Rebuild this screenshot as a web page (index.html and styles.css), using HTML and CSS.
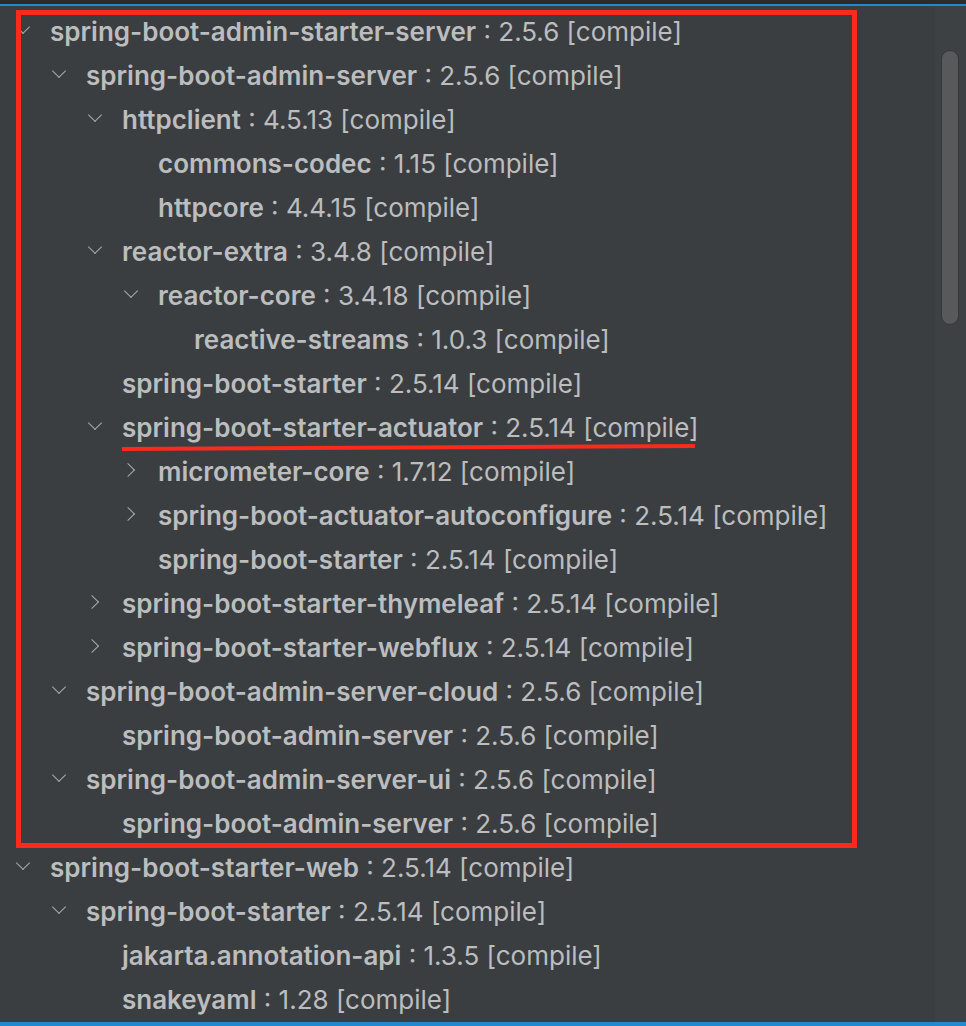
FILE: index.html
```html
<!DOCTYPE html>
<html>
<head>
<meta charset="utf-8">
<link rel="stylesheet" href="styles.css">
</head>
<body>
<div class="page">
  <div class="topbar"></div>
  <div class="blueline"></div>
  <div class="tree">
    <div class="row l0"><span class="chev down"></span><b>spring-boot-admin-starter-server</b><span class="ver"> : 2.5.6 [compile]</span></div>
    <div class="row l1"><span class="chev down"></span><b>spring-boot-admin-server</b><span class="ver"> : 2.5.6 [compile]</span></div>
    <div class="row l2"><span class="chev down"></span><b>httpclient</b><span class="ver"> : 4.5.13 [compile]</span></div>
    <div class="row l3"><span class="chev"></span><b>commons-codec</b><span class="ver"> : 1.15 [compile]</span></div>
    <div class="row l3"><span class="chev"></span><b>httpcore</b><span class="ver"> : 4.4.15 [compile]</span></div>
    <div class="row l2"><span class="chev down"></span><b>reactor-extra</b><span class="ver"> : 3.4.8 [compile]</span></div>
    <div class="row l3"><span class="chev down"></span><b>reactor-core</b><span class="ver"> : 3.4.18 [compile]</span></div>
    <div class="row l4"><span class="chev"></span><b>reactive-streams</b><span class="ver"> : 1.0.3 [compile]</span></div>
    <div class="row l2"><span class="chev"></span><b>spring-boot-starter</b><span class="ver"> : 2.5.14 [compile]</span></div>
    <div class="row l2"><span class="chev down"></span><b>spring-boot-starter-actuator</b><span class="ver"> : 2.5.14 [compile]</span></div>
    <div class="row l3"><span class="chev right"></span><b>micrometer-core</b><span class="ver"> : 1.7.12 [compile]</span></div>
    <div class="row l3"><span class="chev right"></span><b>spring-boot-actuator-autoconfigure</b><span class="ver"> : 2.5.14 [compile]</span></div>
    <div class="row l3"><span class="chev"></span><b>spring-boot-starter</b><span class="ver"> : 2.5.14 [compile]</span></div>
    <div class="row l2"><span class="chev right"></span><b>spring-boot-starter-thymeleaf</b><span class="ver"> : 2.5.14 [compile]</span></div>
    <div class="row l2"><span class="chev right"></span><b>spring-boot-starter-webflux</b><span class="ver"> : 2.5.14 [compile]</span></div>
    <div class="row l1"><span class="chev down"></span><b>spring-boot-admin-server-cloud</b><span class="ver"> : 2.5.6 [compile]</span></div>
    <div class="row l2"><span class="chev"></span><b>spring-boot-admin-server</b><span class="ver"> : 2.5.6 [compile]</span></div>
    <div class="row l1"><span class="chev down"></span><b>spring-boot-admin-server-ui</b><span class="ver"> : 2.5.6 [compile]</span></div>
    <div class="row l2"><span class="chev"></span><b>spring-boot-admin-server</b><span class="ver"> : 2.5.6 [compile]</span></div>
    <div class="row l0"><span class="chev down"></span><b>spring-boot-starter-web</b><span class="ver"> : 2.5.14 [compile]</span></div>
    <div class="row l1"><span class="chev down"></span><b>spring-boot-starter</b><span class="ver"> : 2.5.14 [compile]</span></div>
    <div class="row l2"><span class="chev"></span><b>jakarta.annotation-api</b><span class="ver"> : 1.3.5 [compile]</span></div>
    <div class="row l2"><span class="chev"></span><b>snakeyaml</b><span class="ver"> : 1.28 [compile]</span></div>
  </div>
  <div class="bottomline"></div>
  <div class="scrolltrack"><div class="thumb"></div></div>
  <div class="redbox"></div>
  <div class="redline"></div>
</div>
</body>
</html>
```

FILE: styles.css
```css
html, body {
  margin: 0;
  padding: 0;
  background: #3b3e41;
}
.page {
  position: relative;
  width: 966px;
  height: 1026px;
  overflow: hidden;
  display: flex;
  flex-direction: column;
  background: #3b3e41;
  font-family: Inter, "Noto Sans", sans-serif;
  color: #bcbdbe;
}
.topbar {
  height: 4px;
  background: #2a2b2d;
  flex: none;
}
.blueline {
  height: 2px;
  background: #1f8ad2;
  flex: none;
}
.tree {
  flex: 1;
  padding-top: 3px;
  overflow: hidden;
}
.bottomline {
  height: 4px;
  background: #1f8ad2;
  flex: none;
}
.row {
  height: 44px;
  display: flex;
  align-items: center;
  font-size: 26px;
  white-space: nowrap;
  letter-spacing: 0;
}
.row b {
  font-weight: 600;
}
.ver {
  font-weight: 400;
  white-space: pre;
}
.l0 { padding-left: 14px; }
.l1 { padding-left: 50px; }
.l2 { padding-left: 86px; }
.l3 { padding-left: 122px; }
.l4 { padding-left: 158px; }
.chev {
  width: 18px;
  height: 18px;
  margin-right: 18px;
  flex: none;
  position: relative;
}
.chev.down::before {
  content: "";
  position: absolute;
  left: 4px;
  top: 0px;
  width: 9px;
  height: 9px;
  border-right: 1.8px solid #a9aaab;
  border-bottom: 1.8px solid #a9aaab;
  transform: rotate(45deg);
}
.chev.right::before {
  content: "";
  position: absolute;
  left: 1px;
  top: 3px;
  width: 9px;
  height: 9px;
  border-right: 1.8px solid #a9aaab;
  border-bottom: 1.8px solid #a9aaab;
  transform: rotate(-45deg);
}
.scrolltrack {
  position: absolute;
  left: 935px;
  top: 6px;
  width: 31px;
  height: 1016px;
  background: #3e4144;
}
.thumb {
  position: absolute;
  left: 6px;
  top: 44px;
  width: 16px;
  height: 273px;
  border-radius: 9px;
  background: #58595b;
  border: 1px solid #343638;
}
.redbox {
  position: absolute;
  left: 16px;
  top: 10px;
  width: 831px;
  height: 828px;
  border: 5px solid #fa2a1c;
}
.redline {
  position: absolute;
  left: 122px;
  top: 447px;
  width: 573px;
  height: 4px;
  background: #fa2a1c;
  transform: rotate(-0.3deg);
  transform-origin: left center;
}
```
